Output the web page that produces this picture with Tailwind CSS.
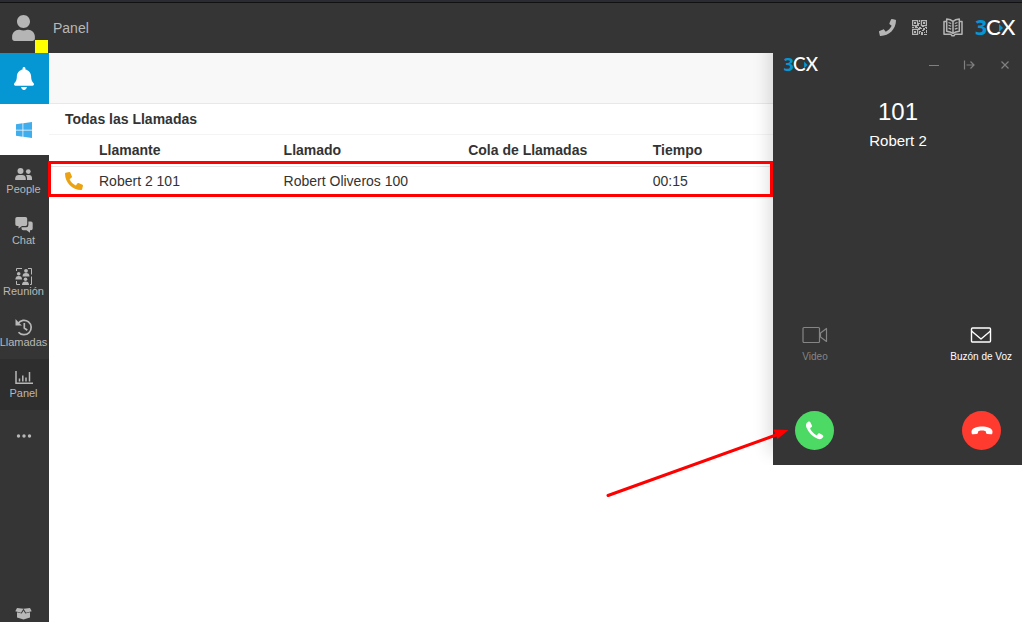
<!DOCTYPE html>
<html lang="es">
<head>
<meta charset="utf-8">
<meta name="viewport" content="width=device-width, initial-scale=1">
<title>Panel</title>
<script src="https://cdn.jsdelivr.net/npm/@tailwindcss/browser@4"></script>
</head>
<body class="relative flex min-h-screen flex-col overflow-hidden bg-white font-['Liberation_Sans',Arial,sans-serif] text-[#333]">
<svg class="hidden" aria-hidden="true">
  <symbol id="phone" viewBox="0 0 512 512"><path d="M493.4 24.6l-104-24c-11.3-2.6-22.9 3.3-27.5 13.9l-48 112c-4.2 9.8-1.4 21.3 6.9 28l60.6 49.6c-36 76.7-98.9 140.5-177.2 177.2l-49.6-60.6c-6.8-8.3-18.2-11.1-28-6.9l-112 48C3.9 366.5-2 378.1.6 389.4l24 104C27.1 504.2 36.7 512 48 512c256.1 0 464-207.5 464-464 0-11.2-7.7-20.9-18.6-23.4z"/></symbol>
  <symbol id="person" viewBox="0 0 448 512"><path d="M224 256c70.7 0 128-57.3 128-128S294.7 0 224 0 96 57.3 96 128s57.3 128 128 128zm89.6 32h-16.700c-22.200 10.200-46.900 16-72.900 16s-50.600-5.800-72.900-16h-16.700C60.200 288 0 348.200 0 422.400V464c0 26.500 21.500 48 48 48h352c26.500 0 48-21.500 48-48v-41.600c0-74.200-60.200-134.400-134.400-134.400z"/></symbol>
</svg>

<header class="flex h-[53px] shrink-0 items-center border-t-2 border-[#2b2b33] bg-[#353535] pr-1 shadow-[inset_0_1px_0_#111]">
  <button class="relative flex h-full w-[49px] items-center justify-center text-[#b5b5b5]" aria-label="Perfil">
    <svg class="mr-0.5 h-[26px] w-[23px] fill-current"><use href="#person"/></svg>
    <span class="absolute right-px bottom-0 size-[13px] bg-[#ff0]"></span>
  </button>
  <h1 class="ml-1 flex-1 text-sm text-[#b8b8b8]">Panel</h1>
  <nav class="flex items-center text-[#b5b5b5]">
    <button class="mr-4" aria-label="Teléfono"><svg class="size-[17px] fill-current"><use href="#phone"/></svg></button>
    <button class="mr-4" aria-label="Código QR">
      <svg class="size-[15px]" viewBox="0 0 15 15" fill="none" stroke="currentColor"><path stroke-width="1.300" d="M.6.6h5v5h-5zM9.400.6h5v5h-5zM.6 9.400h5v5h-5z"/><path fill="currentColor" stroke="none" d="M2 2h2v2H2zM11 2h2v2h-2zM2 11h2v2H2zM7 0h1v2H7zM6 3h2v1H7v2H6zM0 7h2v1H0zM3 6h2v1h1v1H3zM7 7h2v1h1v1H8v1H6V8h1zM10 6h2v1h-2zM13 7h2v2h-1v-1h-1zM11 8h2v2h-1v1h-2v-1h1zM7 11h2v1H8v2H7zM9 12h2v3H9zM12 12h1v1h-1zM14 10h1v3h-1zM12 14h3v1h-3z"/></svg>
    </button>
    <button class="mr-3" aria-label="Libreta">
      <svg class="h-[19px] w-5" viewBox="0 0 20 19" fill="none" stroke="currentColor" stroke-width="1.500" stroke-linejoin="round"><path d="M10 3.500C8.500 2 6 1.200 3.700 1v12.300c2.500.2 4.800.9 6.300 2.200 1.500-1.300 3.800-2 6.300-2.200V1C14 1.200 11.500 2 10 3.500zV15.500"/><path d="M3.500 3.500H1v12.800h7l1 1.500h2l1-1.500h7V3.500h-2.500"/><path stroke-width="1.200" d="M5.500 4.500l2.700 1M5.500 7.300l2.700 1M5.500 10.100l2.700 1M14.500 4.500l-2.700 1M14.500 7.300l-2.700 1M14.500 10.100l-2.700 1"/></svg>
    </button>
    <a href="#" aria-label="3CX"><svg class="h-7 w-[43px] overflow-visible font-['Open_Sans',sans-serif] text-[21px] font-medium" viewBox="0 0 43 28"><text x="0" y="21" fill="#0596d4" class="font-bold">3</text><text x="11" y="21" fill="#fff" class="font-['Lato',sans-serif] text-[22px]">C</text><path fill="#0596d4" d="M24 10l4 4-4 4z"/><text x="26" y="21" fill="#fff" class="font-['Lato',sans-serif] text-[22px]">X</text></svg></a>
  </nav>
</header>

<div class="flex flex-1">
  <nav class="flex w-[49px] shrink-0 flex-col bg-[#353535] text-[11px] leading-3 text-[#b8b8b8]">
    <a href="#" aria-label="Notificaciones" class="flex h-[51px] items-center justify-center bg-[#0596d4] text-white"><svg class="mr-0.5 h-[23px] w-5 fill-current" viewBox="0 0 448 512"><path d="M224 512c35.320 0 63.970-28.650 63.970-64H160.030c0 35.350 28.650 64 63.970 64zm215.390-149.710c-19.320-20.760-55.470-51.990-55.470-154.290 0-77.700-54.480-139.900-127.940-155.160V32c0-17.670-14.320-32-31.980-32s-31.980 14.330-31.980 32v20.840C118.560 68.100 64.080 130.300 64.080 208c0 102.300-36.150 133.530-55.470 154.290-6 6.450-8.660 14.160-8.610 21.710.11 16.400 12.980 32 32.100 32h383.800c19.120 0 32-15.600 32.100-32 .05-7.550-2.610-15.270-8.610-21.710z"/></svg></a>
    <a href="#" aria-label="Windows" class="flex h-[51px] items-center justify-center bg-white"><svg class="mr-0.5 size-4 fill-[#40adec]" viewBox="0 32 448 448"><path d="M0 93.700l183.600-25.300v177.400H0V93.700zm0 324.600l183.600 25.300V268.400H0v149.900zm203.800 28L448 480V268.400H203.800v177.900zm0-380.600v180.100H448V32L203.800 65.700z"/></svg></a>
    <a href="#" class="flex h-[51px] flex-col items-center pt-[11px] pr-0.5">
      <svg class="h-[17px] w-[17px] fill-current" viewBox="0 0 17 17"><circle cx="5.500" cy="5" r="3"/><path d="M.2 14v-1.500C.2 10 2 9 3.700 9h3.600c1.700 0 3.500 1 3.500 3.500V14z"/><circle cx="13.300" cy="5.600" r="2.400"/><path d="M12 14h5v-2c0-1.800-1.200-3-2.700-3h-2c-.5 0-.9.1-1.300.3.800.9 1.100 2 1 3.200z"/></svg>
      <span>People</span></a>
    <a href="#" class="flex h-[51px] flex-col items-center pt-[11px] pr-0.5">
      <svg class="h-[17px] w-[18px] fill-current" viewBox="0 0 18 17"><path d="M2 0h8.500a1.700 1.700 0 0 1 1.700 1.700v5.600A1.700 1.700 0 0 1 10.500 9H7l-3.500 2.600V9H2A1.700 1.700 0 0 1 .3 7.300V1.700A1.700 1.700 0 0 1 2 0z"/><path d="M13.400 4.500H16a1.700 1.700 0 0 1 1.700 1.700v5.300a1.700 1.700 0 0 1-1.700 1.700h-1v2.600l-3.500-2.600H8.200a1.700 1.700 0 0 1-1.700-1.700v-1.300h4.700a2.200 2.200 0 0 0 2.200-2.200z"/></svg>
      <span>Chat</span></a>
    <a href="#" class="flex h-[51px] flex-col items-center pt-[11px] pr-0.5">
      <svg class="h-[17px] w-[17px]" viewBox="0 0 17 17"><g fill="currentColor"><circle cx="11" cy="2.800" r="1.900"/><path d="M7.500 8.500c0-2.500 1.200-3.500 3.500-3.500s3.500 1 3.500 3.500z"/><circle cx="3.700" cy="5.800" r="1.800"/><path d="M.4 11.400c0-2.200 1.100-3.400 3.300-3.400S7 9.200 7 11.400z"/><circle cx="10.500" cy="11.300" r="1.800"/><path d="M7 17c0-2.500 1.200-3.600 3.500-3.600S14 14.500 14 17z"/></g><path fill="none" stroke="currentColor" d="M1.500 3V.5h5.500M13 .5h3.500v6M16.500 8.500v8H15M1.500 13v3.500H5"/></svg>
      <span>Reunión</span></a>
    <a href="#" class="flex h-[51px] flex-col items-center pt-[11px] pr-0.5">
      <svg class="h-[17px] w-[18px]" viewBox="0 0 18 17" fill="none" stroke="currentColor" stroke-width="1.700"><path d="M3 4.500a7.200 7.200 0 1 1 .5 8.700M9.300 4v5l3 2.200"/><path fill="currentColor" stroke="none" d="M.5 0v6.500H7L4.600 4.600z"/></svg>
      <span>Llamadas</span></a>
    <a href="#" class="flex h-[51px] flex-col items-center bg-[#2e2e2e] pt-[11px] pr-0.5">
      <svg class="h-[17px] w-[18px]" viewBox="0 0 18 17" fill="none" stroke="currentColor" stroke-width="1.500"><path d="M1 1v12.300h17M4.500 11.500v-3M7.800 11.500v-6M11 11.500v-4M14.500 11.500V2"/></svg>
      <span>Panel</span></a>
    <button aria-label="Más" class="flex h-[51px] items-center justify-center pr-0.5"><svg class="h-1 w-4 fill-current" viewBox="0 0 16 4"><circle cx="2.500" cy="2" r="1.700"/><circle cx="8" cy="2" r="1.700"/><circle cx="13.500" cy="2" r="1.700"/></svg></button>
    <button aria-label="Novedades" class="mt-auto flex justify-center pr-0.5 pb-0.5"><svg class="h-[13px] w-[17px] fill-current" viewBox="0 0 17 13"><path d="M2 1l6.500.8L6 5.800.3 4.200zM15 1l-6.500.8L11 5.800l5.700-1.600zM2 5.200l4.700 1.300 1.800-3 1.800 3L15 5.200v5.300L8.500 12.500 2 10.500z"/></svg></button>
  </nav>

  <main class="min-w-0 flex-1">
    <div class="h-[51px] border-b border-[#e8e8e8] bg-[#f8f8f8]"></div>
    <h2 class="h-[31px] border-b border-[#f4f4f4] pl-4 text-sm leading-[30px] font-bold">Todas las Llamadas</h2>
    <table class="w-full table-fixed text-left text-sm">
      <thead>
        <tr class="h-[31px] border-b border-[#e8e8e8]"><th class="w-[50px]"></th><th>Llamante</th><th>Llamado</th><th>Cola de Llamadas</th><th>Tiempo</th><th></th></tr>
      </thead>
      <tbody>
        <tr class="h-[29px]"><td class="pl-4"><svg class="size-[18px] fill-[#eba313]"><use href="#phone" transform="matrix(-1 0 0 1 18 0)"/></svg></td><td>Robert 2 101</td><td>Robert Oliveros 100</td><td></td><td>00:15</td><td></td></tr>
      </tbody>
    </table>
  </main>
</div>

<!-- Floating call window -->
<section class="absolute top-[53px] right-0 w-[249px] bg-[#353535] pb-[15px] text-white shadow-[-4px_-12px_16px_rgba(0,0,0,0.14)] [clip-path:inset(0_0_0_-24px)]">
  <div class="flex h-6 items-center pr-3 pl-2.5 text-[#808080]">
    <svg class="h-6 w-[38px] overflow-visible font-['Open_Sans',sans-serif] text-[21px] font-medium" viewBox="0 0 43 28" role="img" aria-label="3CX"><text x="0" y="21" fill="#0596d4" class="font-bold">3</text><text x="11" y="21" fill="#fff" class="font-['Lato',sans-serif] text-[22px]">C</text><path fill="#0596d4" d="M24 10l4 4-4 4z"/><text x="26" y="21" fill="#fff" class="font-['Lato',sans-serif] text-[22px]">X</text></svg>
    <button class="ml-auto" aria-label="Minimizar"><svg class="h-3 w-2.5" viewBox="0 0 10 12"><path d="M0 6.500h10" stroke="currentColor"/></svg></button>
    <button class="ml-6" aria-label="Acoplar"><svg class="h-3 w-3" viewBox="0 0 12 12" fill="none" stroke="currentColor" stroke-width="1.200"><path d="M1.500 1.500v9M3.500 6h8M7.500 2.500L11 6 7.500 9.500"/></svg></button>
    <button class="ml-[25px]" aria-label="Cerrar"><svg class="h-3 w-2.5" viewBox="0 0 10 12" fill="none" stroke="currentColor" stroke-width="1.200"><path d="M1.500 2.500l7 7M8.500 2.500l-7 7"/></svg></button>
  </div>
  <div class="pt-5 pl-px text-center">
    <p class="text-2xl leading-[30px]">101</p>
    <p class="text-[15px] leading-7">Robert 2</p>
  </div>
  <div class="mt-[168px] flex justify-between pr-2.5 pl-[29px] text-[10px] leading-3">
    <button class="flex flex-col items-center gap-1 text-[#858585]" disabled>
      <svg class="h-6 w-[26px]" viewBox="0 0 26 24" fill="none" stroke="currentColor" stroke-width="1.200" stroke-linejoin="round"><rect x="1" y="4.500" width="16.500" height="15" rx="1"/><path d="M18.500 10l6-4.500v13l-6-4.500z"/></svg>Video</button>
    <button class="flex flex-col items-center gap-1">
      <svg class="h-6 w-[22px]" viewBox="0 0 22 24" fill="none" stroke="currentColor" stroke-width="1.400" stroke-linejoin="round"><rect x="1.500" y="5" width="19" height="14" rx="1"/><path d="M1.500 8l9.500 8 9.500-8"/></svg>Buzón de Voz</button>
  </div>
  <div class="mt-12 flex justify-between pr-[21px] pl-[22px]">
    <button aria-label="Contestar" class="flex size-[39px] items-center justify-center rounded-full bg-[#4cd964]">
      <svg class="size-5 fill-white" viewBox="0 0 20 20"><path d="M2.800 1.100C4 .3 5 .5 5.500 1.600l1.300 2.700c.4.900.2 1.600-.5 2l-.9.600c-.3.300-.3.700-.1 1.200 1.200 2.400 3.200 4.500 5.700 6 .5.300.9.200 1.200-.2l.6-.9c.5-.7 1.300-.9 2.100-.4l2.600 1.400c.9.500 1.100 1.400.5 2.200-1.400 2-3.200 2.500-5.400 1.500C7.300 15.500 3.500 11.500 1.400 6.500.5 4.200 1 2.300 2.800 1.100z"/></svg>
    </button>
    <button aria-label="Colgar" class="flex size-[39px] items-center justify-center rounded-full bg-[#ff3b30]">
      <svg class="h-[9px] w-[22px] fill-white" viewBox="0 0 22 9"><path d="M11 .5c4.800 0 8.800 1.400 10 3.500.6 1 .6 2.200.3 3.400-.2.700-.7 1-1.500.9l-3.400-.3c-.9-.1-1.300-.5-1.400-1.200l-.1-1c-.1-.5-.4-.8-.9-.9-1.900-.4-4.100-.4-6 0-.5.100-.8.400-.9.900l-.1 1c-.1.700-.5 1.100-1.400 1.200l-3.400.3C1.400 8.400.9 8.100.7 7.400.4 6.200.4 5 1 4 2.200 1.900 6.200.5 11 .5z"/></svg>
    </button>
  </div>
</section>

<!-- Annotations -->
<div class="pointer-events-none absolute top-[161px] right-[249px] left-12 h-9 border-3 border-[red]"></div>
<svg class="pointer-events-none absolute top-[425px] right-[232px] h-[75px] w-[186px]" viewBox="604 425 186 75" aria-hidden="true"><path d="M608 495.500L776 435" stroke="red" stroke-width="3" stroke-linecap="round"/><path fill="red" d="M788.500 430l-15-.5 4 9.500z"/></svg>
</body>
</html>
